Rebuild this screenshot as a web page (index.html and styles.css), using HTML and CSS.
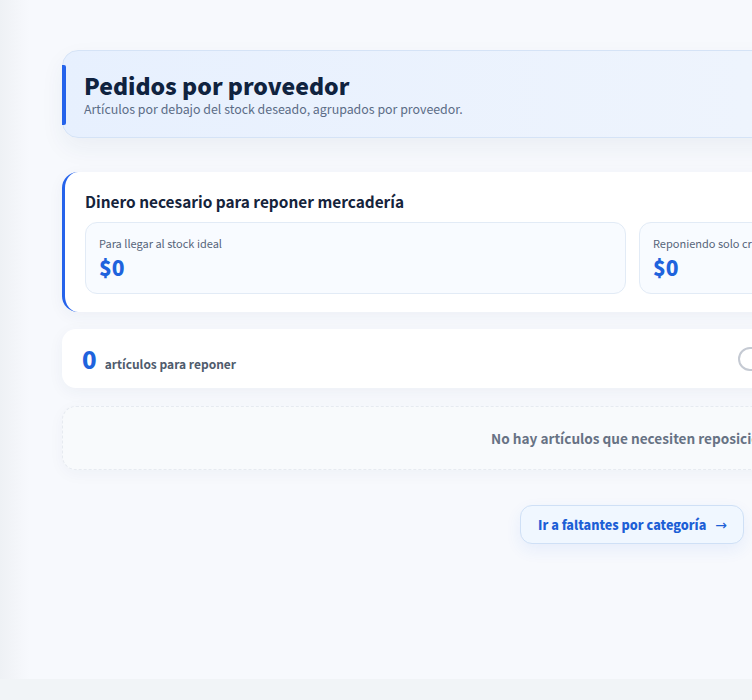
FILE: index.html
```html
<!DOCTYPE html>
<html lang="es">
<head>
<meta charset="utf-8">
<title>Pedidos por proveedor</title>
<link rel="stylesheet" href="styles.css">
</head>
<body>
<div class="page">
  <div class="edge"></div>
  <main class="main">
    <div class="container">
      <header class="hero">
        <h1 class="hero-title">Pedidos por proveedor</h1>
        <p class="hero-sub">Artículos por debajo del stock deseado, agrupados por proveedor.</p>
      </header>

      <section class="card money">
        <h2 class="money-title">Dinero necesario para reponer mercadería</h2>
        <div class="money-grid">
          <div class="stat">
            <div class="stat-label">Para llegar al stock ideal</div>
            <div class="stat-value">$0</div>
          </div>
          <div class="stat">
            <div class="stat-label">Reponiendo solo críticos</div>
            <div class="stat-value">$0</div>
          </div>
        </div>
      </section>

      <section class="card count">
        <div class="count-left">
          <span class="count-num">0</span>
          <span class="count-text">artículos para reponer</span>
        </div>
        <div class="toggle"><span class="knob"></span></div>
      </section>

      <section class="empty">No hay artículos que necesiten reposición.</section>

      <div class="actions">
        <a class="btn" href="#">Ir a faltantes por categoría <span class="arrow">→</span></a>
      </div>
    </div>
  </main>
</div>
<footer class="foot"></footer>
</body>
</html>
```
FILE: styles.css
```css
html, body {
  margin: 0;
  padding: 0;
  overflow: hidden;
}
body {
  font-family: "Noto Sans CJK JP", "Noto Sans", sans-serif;
  background: #f1f4f7;
  width: 1300px;
}
.page {
  display: flex;
  min-height: 679px;
  background: #f7f9fd;
}
.edge {
  width: 30px;
  flex: none;
  background: linear-gradient(90deg, #eef1f5 0%, #f3f5f9 50%, #f7f9fd 100%);
}
.main {
  flex: 1;
  padding: 50px 0 40px 32px;
}
.container {
  width: 1140px;
  display: flex;
  flex-direction: column;
}
.hero {
  position: relative;
  box-sizing: border-box;
  height: 88px;
  border: 1px solid #d5e3f6;
  border-radius: 16px;
  background: linear-gradient(90deg, #e7f0fe 0%, #eef4fd 60%, #f5f8fd 100%);
  padding: 19px 22px 0 21px;
  box-shadow: 0 10px 24px rgba(30, 60, 110, 0.06);
}
.hero::before {
  content: "";
  position: absolute;
  left: -1px;
  top: 14px;
  bottom: 12px;
  width: 4px;
  border-radius: 0 2px 2px 0;
  background: #2563eb;
}
.hero-title {
  margin: 0;
  font-size: 23px;
  line-height: 31px;
  font-weight: 900;
  color: #10233f;
}
.hero-sub {
  margin: 0;
  font-size: 12.4px;
  line-height: 17px;
  color: #5b6c86;
}
.card {
  background: #ffffff;
  border-radius: 16px;
  box-shadow: 0 4px 16px rgba(30, 50, 90, 0.05);
}
.money {
  margin-top: 34px;
  height: 140px;
  box-sizing: border-box;
  border-left: 3px solid #2563eb;
  padding: 18px 22px 0 20px;
}
.money-title {
  margin: 0 0 10px 0;
  font-size: 15.4px;
  line-height: 22px;
  font-weight: 700;
  color: #15233b;
}
.money-grid {
  display: grid;
  grid-template-columns: 1fr 1fr;
  gap: 13px;
}
.stat {
  box-sizing: border-box;
  height: 72px;
  background: #f8fbff;
  border: 1px solid #e2ebf6;
  border-radius: 12px;
  padding: 12px 14px 0 13px;
}
.stat-label {
  font-size: 11px;
  line-height: 17px;
  color: #56647a;
}
.stat-value {
  margin-top: 1px;
  font-size: 21px;
  line-height: 28px;
  font-weight: 900;
  color: #1f63dd;
}
.count {
  margin-top: 17px;
  height: 59px;
  box-sizing: border-box;
  border-radius: 14px;
  padding: 0 20px 0 20px;
  display: flex;
  align-items: center;
  justify-content: space-between;
}
.count-left {
  display: flex;
  align-items: baseline;
  gap: 8px;
}
.count-num {
  font-size: 24px;
  line-height: 28px;
  font-weight: 900;
  color: #1f63dd;
}
.count-text {
  font-size: 12px;
  font-weight: 700;
  color: #4f5b6c;
}
.toggle {
  position: relative;
  margin-left: auto;
  margin-right: 400px;
  width: 44px;
  height: 24px;
  box-sizing: border-box;
  border: 2px solid #c5cad3;
  border-radius: 12px;
  background: #ffffff;
}
.knob {
  position: absolute;
  left: 1px;
  top: 1px;
  width: 18px;
  height: 18px;
  border-radius: 50%;
  background: #ffffff;
}
.empty {
  margin-top: 18px;
  height: 64px;
  box-sizing: border-box;
  background: #f8fafc;
  border: 1px dashed #e6eaf0;
  border-radius: 14px;
  display: flex;
  align-items: center;
  justify-content: center;
  font-size: 13.6px;
  font-weight: 700;
  color: #677284;
  box-shadow: 0 4px 16px rgba(30, 50, 90, 0.04);
}
.actions {
  margin-top: 35px;
  display: flex;
  justify-content: center;
}
.btn {
  display: inline-flex;
  align-items: center;
  gap: 9px;
  height: 39px;
  box-sizing: border-box;
  padding: 0 16px 0 17px;
  background: #f0f7ff;
  border: 1px solid #cfe0f6;
  border-radius: 12px;
  text-decoration: none;
  font-size: 12.6px;
  font-weight: 900;
  color: #1d5fd6;
  box-shadow: 0 6px 16px rgba(37, 99, 235, 0.08);
}
.arrow {
  font-family: "DejaVu Sans", sans-serif;
  font-weight: 400;
  font-size: 14px;
}
.foot {
  height: 21px;
  background: #f1f4f7;
}
```
